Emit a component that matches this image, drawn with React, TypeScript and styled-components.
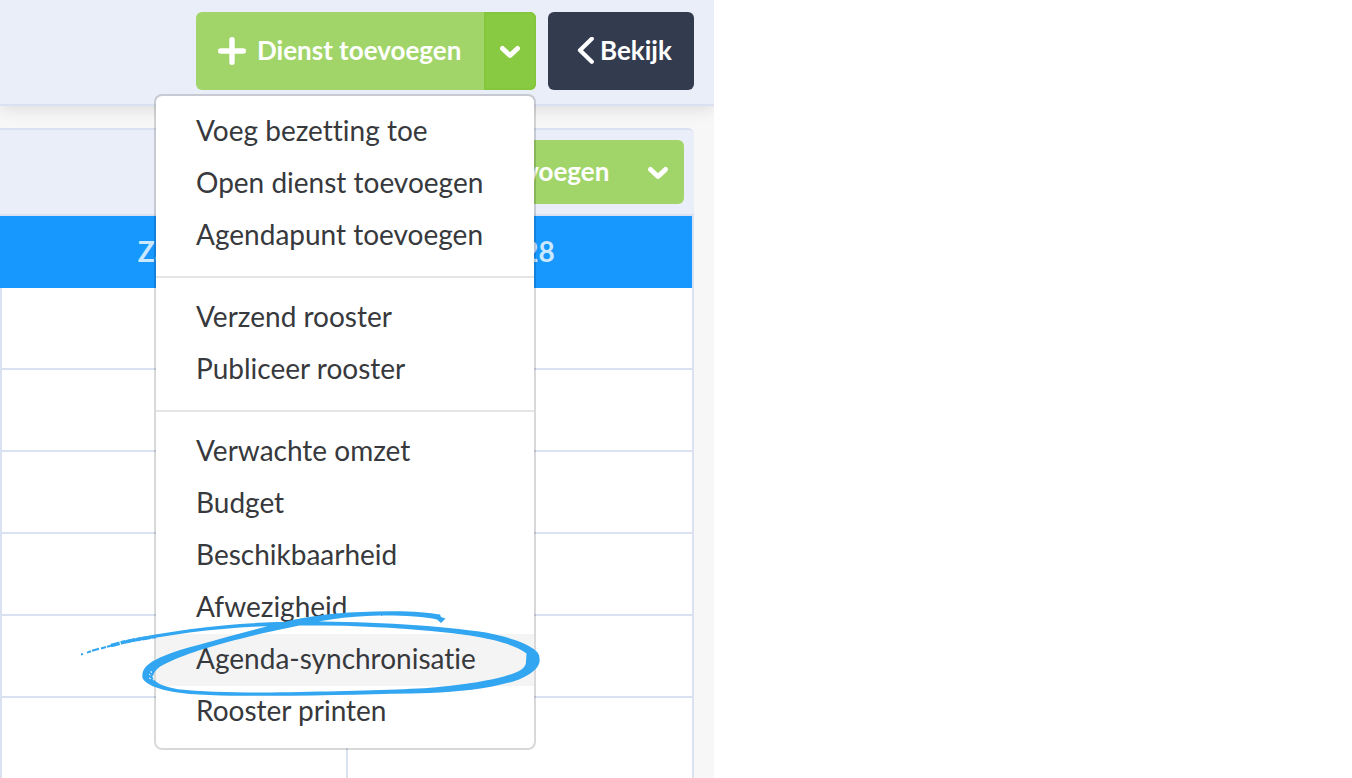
import React from "react";
import styled, { createGlobalStyle } from "styled-components";

const GlobalStyle = createGlobalStyle`
  *, *::before, *::after { box-sizing: border-box; }
  body {
    margin: 0;
    background: #fff;
    color: #37393d;
    font-family: Lato, "Open Sans", sans-serif;
    font-size: 28px;
    font-variant-ligatures: none;
  }
`;

const Page = styled.div`
  display: flex;
  flex-direction: column;
  max-width: 714px;
  height: 100vh;
  overflow: hidden;
  background: #f7f7f7;
`;

const TopBar = styled.header`
  position: relative;
  z-index: 1;
  display: flex;
  justify-content: flex-end;
  gap: 12px;
  padding: 12px 20px 14px;
  background: #eaeef8;
  border-bottom: 2px solid #dae2f1;
  box-shadow: 0 2px 16px rgba(0, 0, 0, 0.12);
`;

const SplitButton = styled.div<{ $height: number }>`
  position: relative;
  display: flex;
  height: ${(p) => p.$height}px;
`;

const Button = styled.button`
  display: flex;
  align-items: center;
  padding: 0 22px;
  border: 0;
  font: 700 26px/32px Lato, "Open Sans", sans-serif;
  white-space: nowrap;
  color: #fff;
  cursor: pointer;
`;

const ButtonLabel = styled.span`
  padding-bottom: 2px;
`;

const AddButton = styled(Button)`
  gap: 11px;
  min-width: 288px;
  background: #a1d56a;
  border-radius: 6px 0 0 6px;
`;

const ToggleButton = styled(Button)<{ $open?: boolean }>`
  justify-content: center;
  width: 52px;
  padding: 0;
  background: ${(p) => (p.$open ? "#88ca41" : "#a1d56a")};
  box-shadow: ${(p) => (p.$open ? "inset 0 0 0 2px #84c63c" : "none")};
  border-radius: 0 6px 6px 0;
`;

const ViewButton = styled(Button)`
  gap: 4px;
  min-width: 146px;
  padding: 0 22px 0 28px;
  background: #333b4f;
  border-radius: 6px;
`;

const Menu = styled.ul`
  position: absolute;
  top: calc(100% + 4px);
  right: 0;
  width: 382px;
  margin: 0;
  padding: 10px 0;
  list-style: none;
  background: #fff;
  background-clip: padding-box;
  border: 2px solid rgba(0, 0, 0, 0.15);
  border-radius: 8px;
`;

const MenuItem = styled.li`
  position: relative;
`;

const MenuLink = styled.a<{ $active?: boolean }>`
  display: block;
  padding: 6px 38px 10px 40px;
  line-height: 36px;
  white-space: nowrap;
  color: inherit;
  text-decoration: none;
  background: ${(p) => (p.$active ? "#f4f4f4" : "transparent")};
`;

const Divider = styled.li`
  height: 2px;
  margin: 14px 0;
  background: #e5e5e5;
`;

const Scribble = styled.svg`
  position: absolute;
  top: -34px;
  left: -86px;
  width: 480px;
  height: 110px;
  overflow: visible;
  pointer-events: none;
`;

const Schedule = styled.main`
  flex: 1;
  padding: 22px 20px 0 0;
`;

const ScheduleBar = styled.div`
  display: flex;
  justify-content: flex-end;
  padding: 10px;
  background: #eaeef8;
  border-top: 2px solid #dae2f1;
  border-bottom: 2px solid #dae2f1;
  border-top-right-radius: 6px;
`;

const Grid = styled.table`
  width: 100%;
  table-layout: fixed;
  border-collapse: separate;
  border-spacing: 0;
  background: #fff;
  border-right: 2px solid #dae2f1;
`;

const DayHead = styled.th`
  height: 72px;
  padding: 0 0 2px;
  font-size: 28px;
  font-weight: 700;
  text-align: center;
  color: #cbe8ff;
  background: #1798ff;
`;

const DayCell = styled.td`
  height: 82px;
  padding: 0;
  border-left: 2px solid #dae2f1;
  border-bottom: 2px solid #dae2f1;
`;

const PlusIcon = () => (
  <svg width="28" height="28" viewBox="0 0 28 28" aria-hidden="true">
    <path d="M14 2.700v22.600M2.700 14h22.600" stroke="#fff" strokeWidth="5.400" strokeLinecap="round" />
  </svg>
);

const ChevronDown = () => (
  <svg width="20" height="12" viewBox="0 0 20 12" aria-hidden="true" overflow="visible">
    <path d="M2.500 3.500l7.500 7 7.500-7" fill="none" stroke="#fff" strokeWidth="5" strokeLinecap="round" strokeLinejoin="round" />
  </svg>
);

const ChevronLeft = () => (
  <svg width="20" height="28" viewBox="0 0 20 28" aria-hidden="true">
    <path d="M15.800 1.800L4 13.200l11.800 11.600" fill="none" stroke="#fff" strokeWidth="4.200" strokeLinecap="round" strokeLinejoin="round" />
  </svg>
);

const HandDrawnCircle = () => (
  <Scribble viewBox="70 600 480 110" aria-hidden="true">
    <defs>
      <filter id="rough" x="-5%" y="-10%" width="110%" height="120%">
        <feTurbulence type="fractalNoise" baseFrequency="0.3" numOctaves="2" seed="4" />
        <feDisplacementMap in="SourceGraphic" scale="1.4" />
      </filter>
    </defs>
    <g filter="url(#rough)" fill="none" stroke="#33a6f0">
      <path d="M81 654.500l2-.6M87 652.600l4-1.300M92 650.800l7-2M101 648.500l5-1.500M107 646.800l6-1.600" strokeWidth="2" />
      <path d="M111 645.500C123 642 138 639 156 636.500" strokeWidth="3.600" strokeDasharray="9 1 5 1" />
      <path
        fill="#33a6f0"
        stroke="none"
        d="M125 640.500C180 628.500 240 622 300 621.500C365 621 440 625.500 486 632.500C512 637.500 530 645 536 651C539 653 540 657 539.500 662C538 669 531 674 519 679.500C495 688 460 692 430 693C380 694 330 695.500 270 695.800C230 696 195 695.500 174 692C157 689 145 684 142.500 678C141 669 148 663 160 657.500C172 652 186 648 200 644.500C225 637.500 262 627.500 290 620.500C320 614 350 611.500 390 611.200C410 611 430 612.500 440 614.500L441 617L445.500 618.500L441 623L437 619.500C425 616.500 400 615.200 380 615.500C345 616 318 621 290 627.500C262 633 225 642 200 650C185 655 172 660 162 665.500C156 669 153 673 153 678C155 683 165 687 178 689.200C210 692.700 260 692.800 300 692C350 691 400 690 430 687.800C465 685 495 680 512 674C521 671 526 667 526 662L526.500 653.500C517 645.500 495 639.500 470 635.500C420 628.500 360 625.300 300 625.300C240 625.500 180 632 125 643.500Z"
      />
      <path stroke="#f8f8f8" strokeWidth="1" strokeDasharray="2 2" d="M149 674l4 3M151 671l1 4M149 678l5 2" />
    </g>
  </Scribble>
);

const menuGroups = [
  ["Voeg bezetting toe", "Open dienst toevoegen", "Agendapunt toevoegen"],
  ["Verzend rooster", "Publiceer rooster"],
  ["Verwachte omzet", "Budget", "Beschikbaarheid", "Afwezigheid", "Agenda-synchronisatie", "Rooster printen"],
];
const activeItem = "Agenda-synchronisatie";
const days = ["Za 27", "Zo 28"];
const rows = [1, 2, 3, 4, 5, 6];

export default function App() {
  return (
    <>
      <GlobalStyle />
      <Page>
        <TopBar>
          <SplitButton $height={78}>
            <AddButton type="button">
              <PlusIcon />
              <ButtonLabel>Dienst toevoegen</ButtonLabel>
            </AddButton>
            <ToggleButton type="button" $open aria-expanded="true" aria-label="Meer opties">
              <ChevronDown />
            </ToggleButton>
            <Menu>
              {menuGroups.map((group, i) => (
                <React.Fragment key={group[0]}>
                  {i > 0 && <Divider role="separator" />}
                  {group.map((label) => (
                    <MenuItem key={label}>
                      <MenuLink href="#" $active={label === activeItem}>
                        {label}
                      </MenuLink>
                      {label === activeItem && <HandDrawnCircle />}
                    </MenuItem>
                  ))}
                </React.Fragment>
              ))}
            </Menu>
          </SplitButton>
          <ViewButton type="button">
            <ChevronLeft />
            <ButtonLabel>Bekijk</ButtonLabel>
          </ViewButton>
        </TopBar>
        <Schedule>
          <ScheduleBar>
            <SplitButton $height={64}>
              <AddButton type="button">
                <PlusIcon />
                <ButtonLabel>Dienst toevoegen</ButtonLabel>
              </AddButton>
              <ToggleButton type="button" aria-label="Meer opties">
                <ChevronDown />
              </ToggleButton>
            </SplitButton>
          </ScheduleBar>
          <Grid>
            <thead>
              <tr>
                {days.map((day) => (
                  <DayHead key={day} scope="col">
                    {day}
                  </DayHead>
                ))}
              </tr>
            </thead>
            <tbody>
              {rows.map((row) => (
                <tr key={row}>
                  {days.map((day) => (
                    <DayCell key={day} />
                  ))}
                </tr>
              ))}
            </tbody>
          </Grid>
        </Schedule>
      </Page>
    </>
  );
}
